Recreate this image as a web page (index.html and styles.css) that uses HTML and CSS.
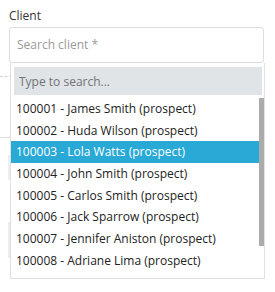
FILE: index.html
```html
<!DOCTYPE html>
<html>
<head>
<meta charset="utf-8">
<link rel="stylesheet" href="styles.css">
</head>
<body>
<div class="page">
  <div class="field">
    <label class="label">Client</label>
    <div class="select">Search client *</div>
  </div>
  <div class="bg-dash"></div>
  <div class="bg-rule"></div>
  <div class="bg-side bg-side-1"></div>
  <div class="bg-side bg-side-2"></div>

  <div class="dropdown">
    <div class="search-wrap">
      <input class="search" type="text" placeholder="Type to search...">
    </div>
    <div class="list-wrap">
      <ul class="options">
        <li>100001 - James Smith (prospect)</li>
        <li>100002 - Huda Wilson (prospect)</li>
        <li class="active">100003 - Lola Watts (prospect)</li>
        <li>100004 - John Smith (prospect)</li>
        <li>100005 - Carlos Smith (prospect)</li>
        <li>100006 - Jack Sparrow (prospect)</li>
        <li>100007 - Jennifer Aniston (prospect)</li>
        <li>100008 - Adriane Lima (prospect)</li>
      </ul>
      <div class="thumb"></div>
    </div>
  </div>
</div>
</body>
</html>
```
FILE: styles.css
```css
* { box-sizing: border-box; }
html, body { margin: 0; padding: 0; background: #fff; }
body {
  font-family: "Open Sans", "Noto Sans", sans-serif;
  color: #222;
  width: 275px;
  height: 292px;
  overflow: hidden;
}
.page { position: relative; height: 292px; }
.field { padding: 9px 11px 0 9px; }
.label {
  display: block;
  font-size: 12px;
  line-height: 14px;
  color: #333;
  margin-bottom: 4px;
}
.select {
  height: 36px;
  border: 1px solid #dcdcdc;
  border-radius: 3px;
  padding: 0 0 0 7px;
  font-size: 12px;
  line-height: 34px;
  color: #9a9a9a;
}
.bg-dash {
  position: absolute;
  left: 0; top: 76px;
  width: 12px;
  border-top: 1px dashed #cfcfcf;
}
.bg-rule {
  position: absolute;
  left: 0; top: 137px;
  width: 12px;
  border-top: 1px solid #e2e2e2;
}
.bg-side {
  position: absolute;
  left: 8px;
  width: 2px;
  background: #eceeef;
}
.bg-side-1 { top: 155px; height: 25px; }
.bg-side-2 { top: 222px; height: 36px; }
.dropdown {
  position: absolute;
  left: 10px;
  top: 63px;
  width: 255px;
  height: 216px;
  background: #fff;
  border: 1px solid #e0e0e0;
  border-top: none;
  z-index: 2;
}
.search-wrap { padding: 4px 2px 3px 3px; }
.search {
  display: block;
  width: 100%;
  height: 28px;
  border: none;
  outline: none;
  background: #e1e4e7;
  padding: 0 5px;
  font-family: inherit;
  font-size: 12px;
  color: #333;
}
.search::placeholder { color: #6f7377; }
.list-wrap {
  position: relative;
  height: 180px;
  overflow: hidden;
}
.options {
  list-style: none;
  margin: 0;
  padding: 0 5px 0 0;
}
.options li {
  height: 21.7px;
  line-height: 21.7px;
  padding-left: 5px;
  font-size: 12px;
  color: #222;
  white-space: nowrap;
}
.options li.active { background: #29a9d6; color: #fff; }
.thumb {
  position: absolute;
  right: 0;
  top: 0;
  width: 5px;
  height: 148px;
  background: #ababab;
}
```
